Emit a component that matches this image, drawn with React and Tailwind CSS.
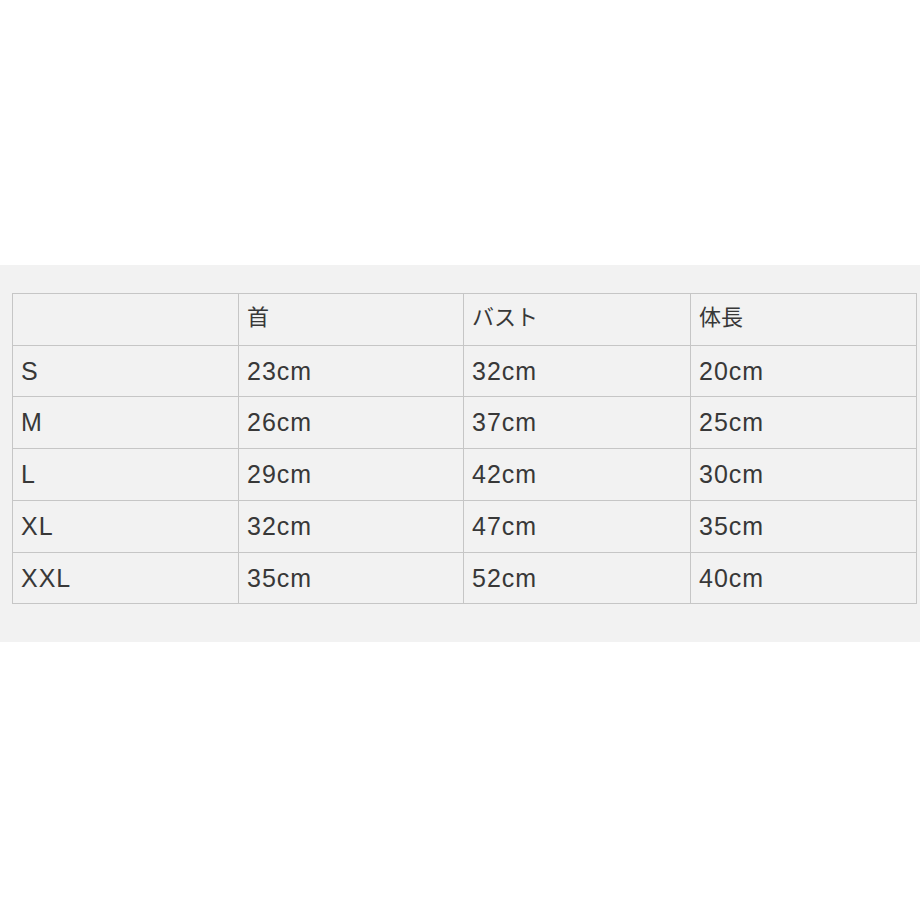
import React from "react";

const rows = [
  ["S", "23cm", "32cm", "20cm"],
  ["M", "26cm", "37cm", "25cm"],
  ["L", "29cm", "42cm", "30cm"],
  ["XL", "32cm", "47cm", "35cm"],
  ["XXL", "35cm", "52cm", "40cm"],
];
const heights = ["h-[51px]", "h-[52px]", "h-[52px]", "h-[52px]", "h-[51px]"];
const widths = ["w-[226px]", "w-[225px]", "w-[227px]", "w-[226px]"];

export default function App() {
  return (
    <div className="w-[920px] h-[920px] bg-white flex flex-col" style={{ fontFamily: '"Liberation Sans", "Noto Sans CJK JP", sans-serif' }}>
      <div className="h-[265px] bg-white" />
      <div className="h-[377px] bg-[#f2f2f2] pt-[28px] pl-[12px]">
        <div className="flex flex-col w-[905px] border-r border-b border-[#c6c6c6] text-[#383838]">
          <div className="flex h-[52px]">
            {["", "首", "バスト", "体長"].map((t, i) => (
              <div key={i} className={`${widths[i]} border-l border-t border-[#c6c6c6] flex items-center pl-2 pb-[10px] text-[22px]`}>
                <span style={{ fontFamily: '"Noto Sans CJK JP", sans-serif' }} className="leading-none">{t}</span>
              </div>
            ))}
          </div>
          {rows.map((r, ri) => (
            <div key={ri} className={`flex ${heights[ri]}`}>
              {r.map((t, i) => (
                <div key={i} className={`${widths[i]} border-l border-t border-[#c6c6c6] flex items-center pl-2 text-[25px] tracking-[1px] leading-none`}>
                  {t}
                </div>
              ))}
            </div>
          ))}
        </div>
      </div>
      <div className="flex-1 bg-white" />
    </div>
  );
}
